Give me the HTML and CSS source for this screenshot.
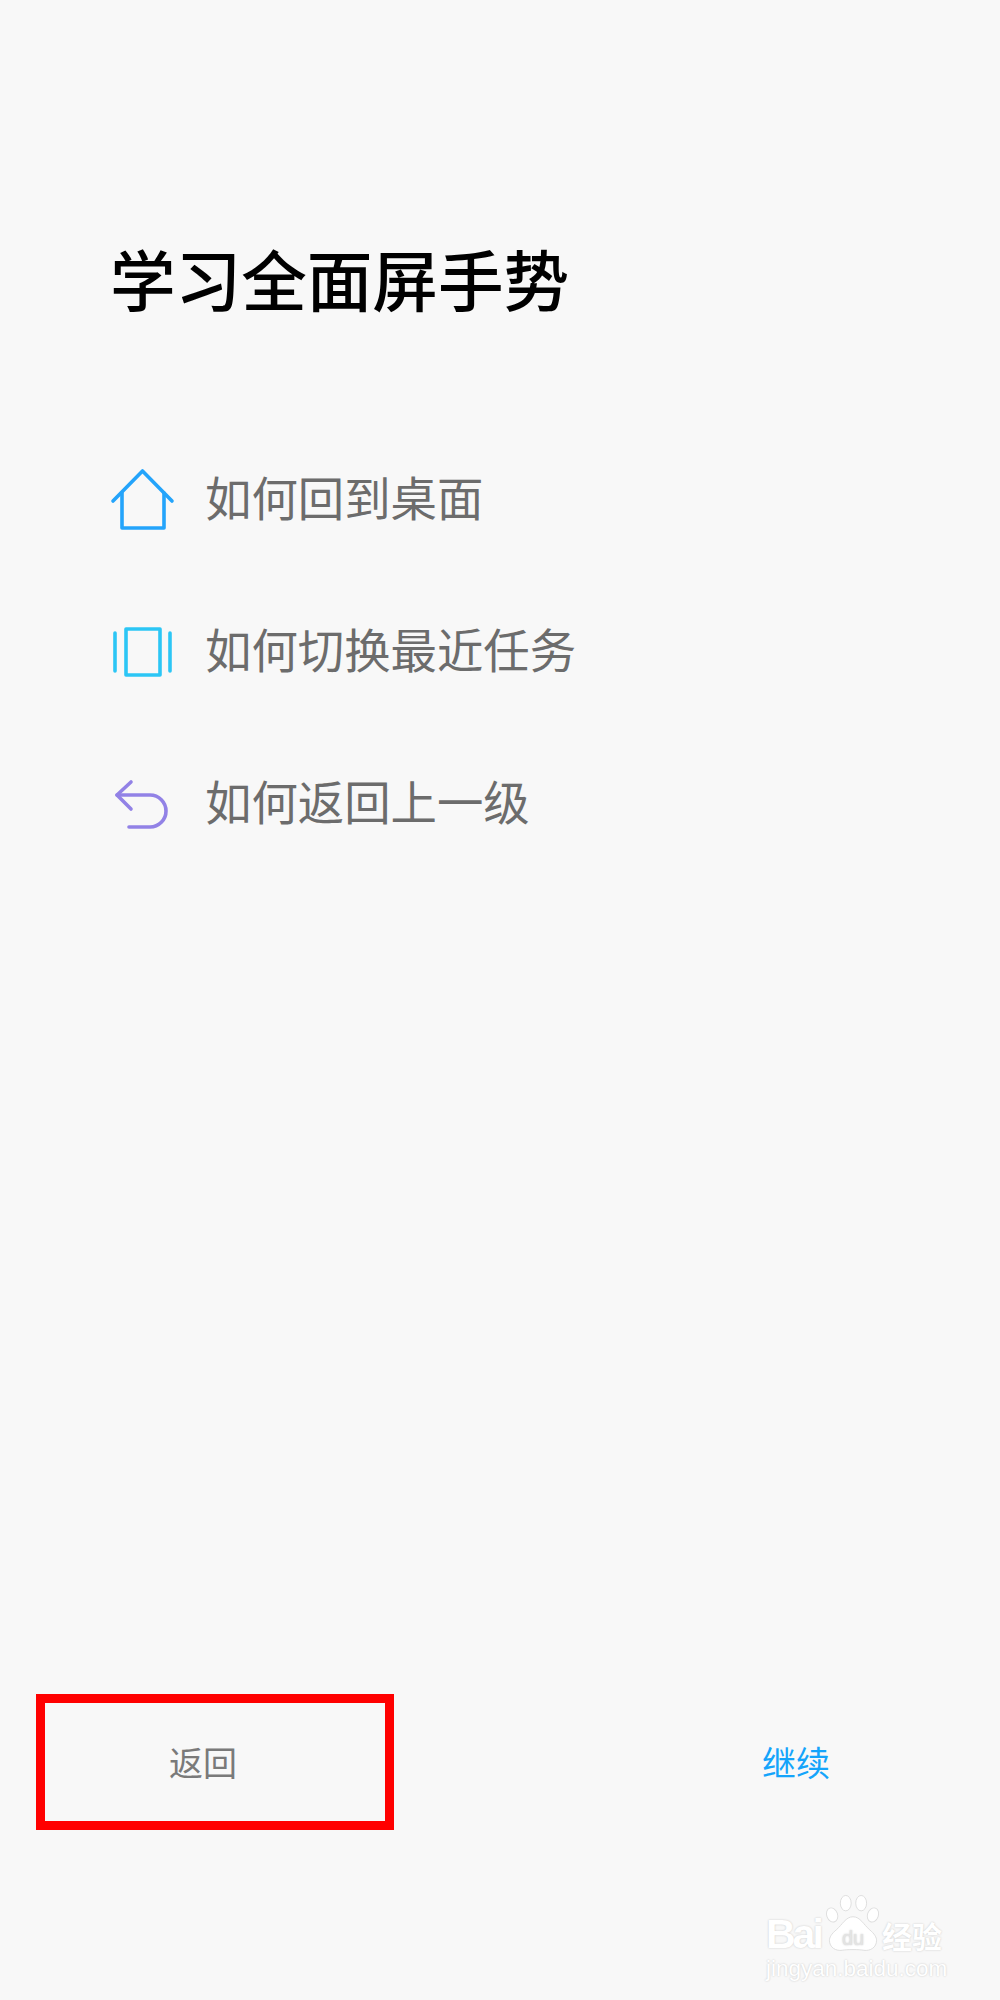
FILE: index.html
```html
<!DOCTYPE html>
<html lang="zh-CN">
<head>
  <meta charset="UTF-8" />
  <title>学习全面屏手势</title>
  <link rel="stylesheet" href="styles.css">
</head>
<body>

  <main class="guide">
    <h1 class="guide-title">学习全面屏手势</h1>

    <ul class="guide-list">
      <li class="guide-item">
        <svg class="guide-icon" viewBox="0 0 64 64" fill="none" stroke="#24a4fb" stroke-width="3.6" stroke-linecap="round" stroke-linejoin="round">
          <path d="M1 37 30.500 7 60 37"/>
          <path d="M10 29V64H52V29"/>
        </svg>
        <span>如何回到桌面</span>
      </li>
      <li class="guide-item">
        <svg class="guide-icon" viewBox="0 0 64 64" fill="none" stroke="#2cc6f5" stroke-width="3.6" stroke-linecap="round" stroke-linejoin="round">
          <rect x="14" y="13" width="34" height="46"/>
          <path d="M3 17V55"/>
          <path d="M58 17V55"/>
        </svg>
        <span>如何切换最近任务</span>
      </li>
      <li class="guide-item">
        <svg class="guide-icon" viewBox="0 0 64 64" fill="none" stroke="#9282e6" stroke-width="3.6" stroke-linecap="round" stroke-linejoin="round">
          <path d="M19 14 5 27 19 41"/>
          <path d="M5 27H38A16 16 0 0 1 38 59H17"/>
        </svg>
        <span>如何返回上一级</span>
      </li>
    </ul>
  </main>

  <footer class="actions">
    <button class="action action-back">返回</button>
    <button class="action action-next">继续</button>
  </footer>

  <!-- watermark -->
  <div class="watermark">
    <div class="watermark-top">
      <span class="watermark-bai">Bai</span>
      <svg class="watermark-paw" viewBox="0 0 64 64">
        <ellipse cx="9" cy="22" rx="6" ry="8" transform="rotate(-20 9 22)"/>
        <ellipse cx="24" cy="9" rx="6" ry="8.5"/>
        <ellipse cx="41" cy="9" rx="6" ry="8.5"/>
        <ellipse cx="54" cy="22" rx="6" ry="8" transform="rotate(20 54 22)"/>
        <path d="M32 24C24 24 20 33 14 38C8 43 6 47 6 50C6 58 13 62 20 61C25 60 39 60 44 61C51 62 58 58 58 50C58 47 56 43 50 38C44 33 40 24 32 24Z"/>
        <text class="watermark-paw-text" x="32" y="55" text-anchor="middle">du</text>
      </svg>
      <span class="watermark-du">经验</span>
    </div>
    <div class="watermark-url">jingyan.baidu.com</div>
  </div>

</body>
</html>
```

FILE: styles.css
```css
* {
  box-sizing: border-box;
}

body {
  position: relative;
  display: flex;
  flex-direction: column;
  width: 1000px;
  height: 2000px;
  margin: 0;
  overflow: hidden;
  background-color: #f8f8f8;
  font-family: "Noto Sans CJK SC", "Noto Sans", sans-serif;
}

.guide {
  flex: 1;
  padding: 236px 0 0 112px;
}

.guide-title {
  margin: 0 0 0 -2px;
  font-size: 65.6px;
  line-height: 84px;
  font-weight: 500;
  color: #000;
}

.guide-list {
  display: flex;
  flex-direction: column;
  gap: 71px;
  margin: 135px 0 0;
  padding: 0;
  list-style: none;
}

.guide-item {
  display: flex;
  align-items: center;
  gap: 29px;
  height: 81px;
  font-size: 46.4px;
  color: #6c6c6c;
}

.guide-icon {
  width: 64px;
  height: 64px;
  overflow: visible;
}

.actions {
  display: flex;
  justify-content: space-between;
  align-items: center;
  padding: 0 170px 170px 36px;
}

.action {
  padding: 0 0 2px;
  border: none;
  background: none;
  font-family: inherit;
  font-size: 34px;
}

.action-back {
  width: 358px;
  height: 136px;
  padding-right: 24px;
  border: 9px solid #f00;
  color: #7a7a7a;
}

.action-next {
  color: #14a4fb;
}

.watermark {
  position: absolute;
  left: 766px;
  top: 1892px;
  width: 190px;
  color: #fff;
  text-shadow: 0 0 2px #c4c4c4;
}

.watermark-top {
  display: flex;
  align-items: flex-end;
  height: 62px;
}

.watermark-bai {
  width: 58px;
  font-family: "Liberation Sans", sans-serif;
  font-size: 41px;
  line-height: 40px;
  font-weight: 700;
  letter-spacing: -3px;
}

.watermark-paw {
  width: 58px;
  height: 60px;
  fill: #fff;
  stroke: #dcdcdc;
  stroke-width: 1;
}

.watermark-paw-text {
  font-family: "Liberation Sans", sans-serif;
  font-size: 22px;
  fill: #e4e4e4;
  stroke: none;
}

.watermark-du {
  font-size: 30px;
  line-height: 38px;
  font-weight: 700;
}

.watermark-url {
  margin-top: 2px;
  font-family: "Liberation Sans", sans-serif;
  font-size: 22.5px;
  line-height: 26px;
  white-space: nowrap;
}
```
